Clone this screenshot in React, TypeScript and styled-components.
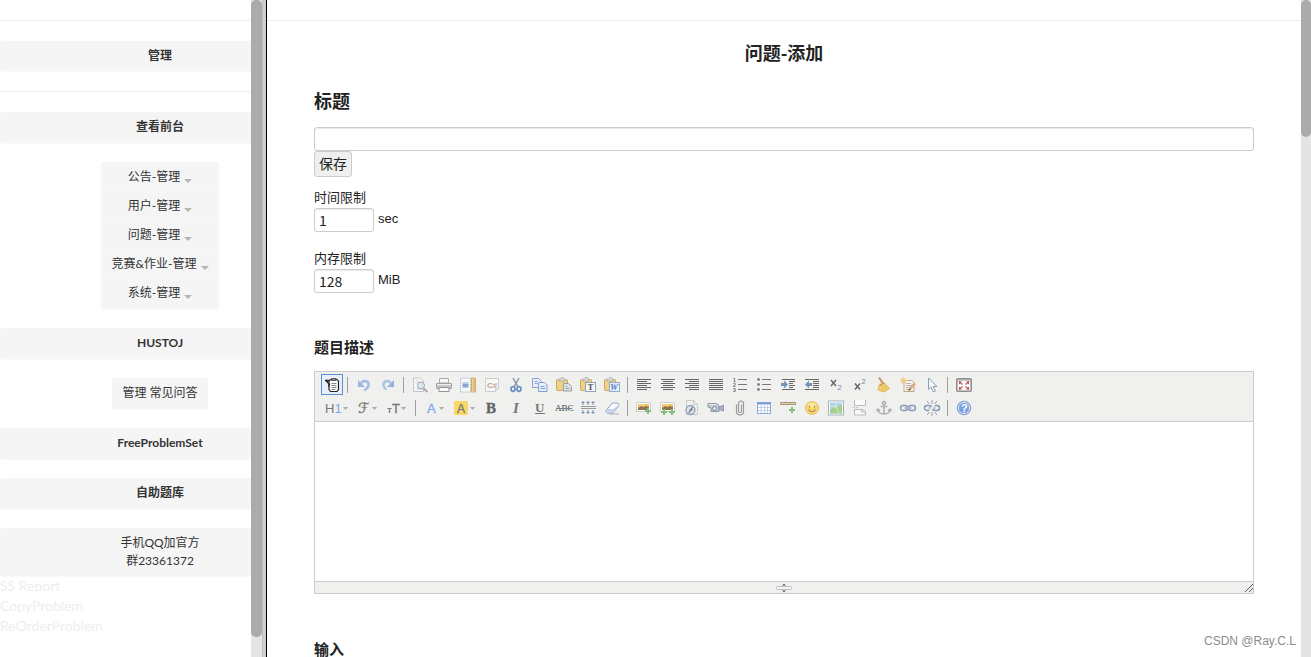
import React from "react";
import styled, { createGlobalStyle } from "styled-components";

const cjk = '"Noto Sans CJK SC", sans-serif';

const GlobalStyle = createGlobalStyle`
  *, *::before, *::after { box-sizing: border-box; }
  body { margin: 0; background: #fff; color: #333; font-family: Lato, ${cjk}; }
`;

/* ---------- frame layout ---------- */

const Page = styled.div`
  display: flex;
  position: relative;
  height: 100vh;
  overflow: hidden;
`;

const Sidebar = styled.nav`
  flex: 0 0 251px;
  overflow: hidden;
`;

const SidebarInner = styled.div`
  display: flex;
  flex-direction: column;
  align-items: center;
  width: 320px;
`;

const ScrollTrack = styled.div<{ $width: number }>`
  flex: 0 0 ${(p) => p.$width}px;
  background: #e4e4e4;
`;

const ScrollThumb = styled.div<{ $length: string }>`
  height: ${(p) => p.$length};
  border-radius: 5px;
  background: #ababab;
`;

const FrameDivider = styled.div`
  flex: 0 0 5px;
  background: #cfcfcf;
  border-left: 1px solid #c0c0c0;
  border-right: 1px solid #000;
`;

const Main = styled.main`
  flex: 1;
  min-width: 0;
  overflow: hidden;
  color: #222;
`;

const Rule = styled.hr`
  align-self: stretch;
  width: 100%;
  height: 1px;
  margin: 20px 0;
  border: 0;
  background: #eee;
`;

/* ---------- sidebar parts ---------- */

const panel = `
  background: #f5f5f5;
  border-radius: 3px;
  box-shadow: 0 1px 1px #f9f9f9;
  color: #333;
  font-size: 12px;
  line-height: 18px;
  text-align: center;
  text-decoration: none;
`;

const NavLink = styled.a<{ $bold?: boolean; $compact?: boolean }>`
  ${panel}
  align-self: ${(p) => (p.$compact ? "center" : "stretch")};
  margin-bottom: 19px;
  padding: 6px 10px 7px;
  font-weight: ${(p) => (p.$bold ? 700 : 400)};
`;

const BarTitle = styled(NavLink)`
  margin-bottom: 0;
  padding-bottom: 6px;
`;

const MenuGroup = styled.div`
  ${panel}
  display: flex;
  flex-direction: column;
  margin-bottom: 19px;
  padding: 1px 0;
`;

const MenuButton = styled.button`
  display: flex;
  align-items: center;
  justify-content: center;
  gap: 4px;
  height: 29px;
  padding: 0 10px;
  border: 0;
  border-bottom: 1px solid #f7f7f7;
  background: none;
  color: inherit;
  font: inherit;
`;

const Caret = styled.span`
  width: 8px;
  margin-top: 8px;
  border: 4px solid transparent;
  border-top-color: #b5b5b5;
  border-bottom: 0;
`;

const GhostLinks = styled.div`
  display: flex;
  flex-direction: column;
  align-items: flex-start;
  width: 100%;
`;

const GhostLink = styled.a`
  color: #eee;
  font-size: 14px;
  line-height: 20px;
  text-decoration: none;
`;

/* ---------- form parts ---------- */

const Form = styled.form`
  width: 100%;
  max-width: 940px;
  margin: 0 auto;
  font-family: "Liberation Sans", ${cjk};
  font-size: 13px;
`;

const PageTitle = styled.h1`
  margin: 0 0 26px;
  font: 700 18px/22px ${cjk};
  text-align: center;
`;

const TitleLabel = styled.label`
  display: block;
  margin-bottom: 16px;
  font: 700 18px/22px ${cjk};
`;

const SectionLabel = styled.label`
  display: block;
  font: 700 15px/20px ${cjk};
`;

const Input = styled.input<{ $short?: boolean }>`
  display: block;
  width: ${(p) => (p.$short ? "60px" : "100%")};
  height: 24px;
  padding: 0 4px;
  border: 1px solid #ccc;
  border-radius: 3px;
  box-shadow: inset 0 1px 1px #eaeaea;
  background: #fff;
  color: #222;
  font: 14px/20px ${cjk};
`;

const SaveButton = styled.button`
  display: block;
  height: 26px;
  margin-bottom: 11px;
  padding: 0 4px 2px;
  border: 1px solid #ccc;
  border-radius: 3px;
  background: #efefef;
  color: #222;
  font: 14px/20px ${cjk};
`;

const Field = styled.div<{ $last?: boolean }>`
  margin-bottom: ${(p) => (p.$last ? "44px" : "17px")};
`;

const FieldLabel = styled.label`
  display: block;
  line-height: 20px;
`;

const FieldRow = styled.div`
  display: flex;
  gap: 4px;
  line-height: 22px;
`;

/* ---------- rich text editor ---------- */

const Editor = styled.div`
  margin: 14px 0 45px;
  border: 1px solid #ccc;
`;

const Toolbar = styled.div`
  padding: 1px 5px 2px;
  border-bottom: 1px solid #ccc;
  background: #f0f0ee;
`;

const ToolRow = styled.div`
  display: flex;
  flex-wrap: wrap;
  align-items: center;
`;

const ToolButton = styled.button<{ $width?: number; $active?: boolean }>`
  display: flex;
  align-items: center;
  justify-content: center;
  width: ${(p) => (p.$width || 24) - 2}px;
  height: 21px;
  margin: 1px;
  padding: 0;
  border: 1px solid ${(p) => (p.$active ? "#5690d2" : "transparent")};
  background: ${(p) => (p.$active ? "#e9effa" : "none")};
`;

const ToolSeparator = styled.span`
  width: 1px;
  height: 16px;
  margin: 0 4px 0 3px;
  background: #a0a0a0;
`;

const EditArea = styled.textarea`
  display: block;
  width: 100%;
  height: 159px;
  padding: 5px;
  border: 0;
  outline: 0;
  resize: none;
`;

const StatusBar = styled.div`
  display: grid;
  grid-template-columns: 1fr auto 1fr;
  align-items: center;
  height: 12px;
  border-top: 1px solid #ccc;
  background: #f0f0ee;
`;

const CornerGrip = styled.svg`
  justify-self: end;
`;

const Watermark = styled.span`
  position: absolute;
  right: 15px;
  bottom: 7px;
  color: #8c8c8c;
  font: 12px/18px "Liberation Sans", sans-serif;
`;

/* ---------- toolbar icons ---------- */

const G = "#777";
const serif = "Liberation Serif, serif";
const sans = "Liberation Sans, sans-serif";

const lines = (rows: [number, number][], y0 = 2) =>
  rows.map(([x, w], i) => <rect key={i} x={x} y={y0 + i * 2} width={w} height="1" fill="#666" />);

const plus = (x: number, y: number) => (
  <path d={`M${x} ${y - 3}v6M${x - 3} ${y}h6`} stroke="#83bf7c" strokeWidth="2" />
);

const clipboard = (
  <>
    <rect x="0.5" y="2.5" width="11" height="11" rx="1" fill="#efd084" stroke="#c9a763" />
    <path d="M3 4V2h1.500l1-1.500h2L8.500 2H9v2z" fill="#d8d8d8" stroke="#aaa" strokeWidth=".7" />
  </>
);

const chain = (
  <g fill="none" stroke="#8799b5">
    <rect x="0.500" y="5.500" width="7" height="5" rx="2.500" strokeWidth="1.400" />
    <rect x="8.500" y="5.500" width="7" height="5" rx="2.500" strokeWidth="1.400" />
    <path d="M4.500 8h7" stroke="#a9b7ce" strokeWidth="1.600" />
  </g>
);

const picture = (
  <>
    <rect x="0.5" y="2.5" width="14" height="9" fill="#fff" stroke="#cfcfcf" />
    <path d="M2 4h11v6H2z" fill="#f2c063" />
    <path d="M2 8l3-2 3 1 2-1 3 1v3H2z" fill="#8d744a" />
    <path d="M3 5h5" stroke="#f8e3a4" />
  </>
);

const icons: Record<string, React.ReactNode> = {
  source: (
    <>
      <path d="M6.500 2.500h6.500l1.500 2v8L13 14.500H6.500L5 12.500V4z" fill="#fff" stroke="#222" strokeWidth="1.200" />
      <path d="M7.500 1.500h4.500v2H7.500z" fill="#888" stroke="#222" strokeWidth=".6" />
      <path d="M7.500 6.500h5M7.500 8.500h5M7.500 10.500h5M7.500 12.500h4" stroke="#777" strokeWidth=".9" />
      <path d="M1.500 3l4 4.500-1 2M1 3.500h4" fill="none" stroke="#222" strokeWidth="1.300" />
    </>
  ),
  undo: (
    <>
      <path d="M5 6C8 2.500 13.500 4 12.500 8.500 12 11 10 12.500 8 13.500" fill="none" stroke="#a3bbe6" strokeWidth="2.400" />
      <path d="M2 3v7h7z" fill="#9cb6e4" />
    </>
  ),
  redo: (
    <>
      <path d="M11 6C8 2.500 3 4 3.500 8.500c.5 2 1.500 3 3 4" fill="none" stroke="#aac2e4" strokeWidth="2.400" />
      <path d="M14 3v7H7z" fill="#92b0dd" />
    </>
  ),
  preview: (
    <>
      <path d="M1.500 1h7l3 3v10.500h-10z" fill="#f7f7f7" stroke="#c4c4c4" />
      <path d="M3.500 4h4M3.500 6h2M3.500 12h4" stroke="#d5d5d5" />
      <circle cx="9" cy="8.500" r="3.500" fill="#dce6ee" stroke="#98a5b1" />
      <path d="M11.500 11.500l4 3.500" stroke="#a4a8ac" strokeWidth="2" />
    </>
  ),
  print: (
    <>
      <path d="M3.500 1.500h9V6h-9z" fill="#f7f7f7" stroke="#aaa" />
      <path d="M.5 6.500h15v5H.5z" fill="#c9c9c9" stroke="#a2a2a2" />
      <path d="M1 7.500h14" stroke="#eee" />
      <path d="M3 10.500h10v4H3z" fill="#fafafa" stroke="#909090" />
    </>
  ),
  template: (
    <>
      <rect x="0.500" y="1" width="10" height="14" fill="#f6f7fa" stroke="#a6adb9" strokeDasharray="1 1" />
      <path d="M2.500 5.500h6v5h-6z" fill="#8ba6d2" />
      <path d="M3 6.500h5" stroke="#bdd0ed" />
      <path d="M11.500 1h4v14h-4z" fill="#f0d192" stroke="#d5ae66" />
      <path d="M13 3h2M13 5h2M13 7h2M13 9h2M13 11h2M13 13h2" stroke="#c39b55" strokeWidth=".6" />
    </>
  ),
  code: (
    <>
      <path d="M1.500 1.500h13v10l-3 3h-10z" fill="#f7f7f6" stroke="#ccc" />
      <path d="M14 11.500h-2.500V14" fill="none" stroke="#ccc" />
      <text x="3" y="11" fontFamily={sans} fontSize="8" fontWeight="700" fill="#bca391">C#</text>
    </>
  ),
  cut: (
    <>
      <path d="M5 1l5 9M11 1L6 10" stroke="#8997a8" strokeWidth="1.500" />
      <g fill="none" stroke="#6d8fc7" strokeWidth="1.700">
        <ellipse cx="5" cy="12" rx="2" ry="2.300" />
        <ellipse cx="11" cy="12" rx="2" ry="2.300" />
      </g>
    </>
  ),
  copy: (
    <g fill="#e8eefa" stroke="#86a2d4">
      <path d="M.5 1.500h6l3 3v6h-9z" />
      <path d="M2.500 4.500h3M2.500 6.500h3" />
      <path d="M6.500 5.500h6l2.500 2.500v6.500H6.500z" />
      <path d="M8.500 9.500h4M8.500 11.500h5" />
    </g>
  ),
  paste: (
    <>
      {clipboard}
      <path d="M7.500 6.500h5l3 3v4.500h-8z" fill="#dde0e5" stroke="#979ca5" />
      <path d="M9.500 9.500h2M9.500 11.500h4" stroke="#9aa4b5" />
    </>
  ),
  pasteText: (
    <>
      {clipboard}
      <rect x="5.500" y="5.500" width="10" height="9" fill="#f4f6fa" stroke="#92a1b7" />
      <text x="7.500" y="13" fontFamily={serif} fontSize="9" fontWeight="700" fill="#555">T</text>
    </>
  ),
  pasteWord: (
    <>
      {clipboard}
      <rect x="5.500" y="5.500" width="10" height="9" fill="#e8f0fd" stroke="#92a9d2" />
      <text x="6" y="13" fontFamily={serif} fontSize="9" fontWeight="700" fontStyle="italic" fill="#557fc6">W</text>
    </>
  ),
  left: lines([[1, 14], [1, 10], [1, 14], [1, 10], [1, 14], [1, 10]]),
  center: lines([[1, 14], [3, 10], [1, 14], [3, 10], [1, 14], [3, 10]]),
  right: lines([[1, 14], [5, 10], [1, 14], [5, 10], [1, 14], [5, 10]]),
  justify: lines([[1, 14], [1, 14], [1, 14], [1, 14], [1, 14], [1, 14]]),
  ordered: (
    <>
      <path d="M6 2.500h9M6 7.500h9M6 12.500h9" stroke="#777" />
      <g fontFamily={sans} fontSize="5" fontWeight="700" fill="#666">
        <text x="1" y="5">1</text>
        <text x="1" y="10">2</text>
        <text x="1" y="15">3</text>
      </g>
    </>
  ),
  bullets: (
    <>
      <path d="M6 2.500h9M6 7.500h9M6 12.500h9" stroke="#777" />
      <g fill="#75808a">
        <circle cx="2.500" cy="2.500" r="1.400" />
        <circle cx="2.500" cy="7.500" r="1.400" />
        <circle cx="2.500" cy="12.500" r="1.400" />
      </g>
    </>
  ),
  indent: (
    <>
      <path d="M2 2.500h13M9 4.500h6M9 6.500h4M9 8.500h6M9 10.500h4M2 12.500h13" stroke="#666" />
      <path d="M1 6h3V3.500L8 7.500l-4 4V9H1z" fill="#7592b8" />
    </>
  ),
  outdent: (
    <>
      <path d="M1 2.500h14M9 4.500h6M9 6.500h6M9 8.500h6M9 10.500h6M1 12.500h14" stroke="#666" />
      <path d="M8 6H5V3.500L1 7.500l4 4V9h3z" fill="#7592b8" />
    </>
  ),
  sub: (
    <>
      <path d="M3 3l5 6M8 3L3 9" stroke="#666" strokeWidth="1.400" />
      <text x="9.500" y="13" fontFamily={sans} fontSize="7" fill="#6b86a6">2</text>
    </>
  ),
  sup: (
    <>
      <path d="M3 6.500l5 6M8 6.500l-5 6" stroke="#666" strokeWidth="1.400" />
      <text x="9.500" y="7" fontFamily={sans} fontSize="7" fill="#6b86a6">2</text>
    </>
  ),
  broom: (
    <>
      <path d="M3 .5l5 7.500" stroke="#cf8d64" strokeWidth="2" />
      <path d="M3 8l5-2.500 5.500 6L8 15 2 13z" fill="#f0d06b" stroke="#dfbb5c" />
      <path d="M4 8.500l4-2.500" stroke="#d08a78" strokeWidth="1.300" />
      <path d="M6 9l3 5M8 8.500l3 4" stroke="#e2c368" />
    </>
  ),
  format: (
    <>
      <path d="M4 3.500h8l2 2v9H4z" fill="#fbf3e2" stroke="#c4a885" />
      <path d="M6 6.500h5M6 8.500h6M6 10.500h4M6 12.500h3" stroke="#a8b0c6" />
      <path d="M3 0v7M0 3.500h7M1 1l5 5M6 1L1 6" stroke="#f0c36a" />
      <path d="M15 6.500L9.500 12" stroke="#d9a980" strokeWidth="2.500" />
      <path d="M10 11l-2 3 3-1z" fill="#665b52" />
    </>
  ),
  select: <path d="M4.500 1v11.500L7 10l2.500 5 2-1-2.500-4.500h4z" fill="#f4f8fd" stroke="#8da0b9" />,
  fullscreen: (
    <>
      <rect x="0.800" y="1.800" width="14.400" height="12.400" rx="1" fill="#fafafa" stroke="#8f8f8f" strokeWidth="1.600" />
      <path d="M1 3h14" stroke="#999" strokeWidth="1" />
      <path d="M3 4.500l3.500 3M13 4.500l-3.500 3M3 12.500l3.500-3M13 12.500l-3.500-3" stroke="#c9605a" strokeWidth="1.200" />
      <path d="M3 4.500h3l-3 3zM13 4.500h-3l3 3zM3 12.500h3l-3-3zM13 12.500h-3l3-3z" fill="#bf4c46" />
    </>
  ),
  bold: <text x="2" y="13" fontFamily={serif} fontSize="15" fontWeight="700" fill="#666" stroke="#666" strokeWidth=".4">B</text>,
  italic: <text x="5" y="13" fontFamily={serif} fontSize="15" fontWeight="700" fontStyle="italic" fill={G}>I</text>,
  underline: (
    <>
      <text x="3" y="12" fontFamily={serif} fontSize="13" fontWeight="700" fill={G}>U</text>
      <path d="M3 13.500h10" stroke={G} />
    </>
  ),
  strike: (
    <>
      <text x="-1" y="11" fontFamily={serif} fontSize="9" fill="#444">ABC</text>
      <path d="M0 8.500h16" stroke="#718196" />
    </>
  ),
  lineHeight: (
    <>
      <path d="M1 6.500h15M1 8.500h15" stroke="#999" />
      <g fill="none" stroke="#7890ae">
        <path d="M3 1v4M8 1v4M13 1v4M3 10v4M8 10v4M13 10v4" />
        <path d="M1.500 2.500h3M6.500 2.500h3M11.500 2.500h3M1.500 12.500h3M6.500 12.500h3M11.500 12.500h3" />
      </g>
    </>
  ),
  eraser: (
    <>
      <path d="M1.500 11l7-8h5l1.500 2.500-6.500 8h-5z" fill="#fafcff" stroke="#8fa3c4" />
      <path d="M1.500 11l2-2h5.500l6-4-6.500 8.500h-5z" fill="#c5d2e7" />
      <path d="M6 14h9" stroke="#b0b0b0" />
    </>
  ),
  image: (
    <>
      {picture}
      {plus(12, 11)}
    </>
  ),
  images: (
    <>
      {picture}
      {plus(4, 12)}
      {plus(12, 12)}
    </>
  ),
  flash: (
    <>
      <path d="M2.500 .500h7l4 4v10h-11z" fill="#f3f3f3" stroke="#c8c8c8" />
      <path d="M9.500 .500v4h4" fill="none" stroke="#c8c8c8" />
      <circle cx="6.500" cy="10" r="4.500" fill="#dde4ea" stroke="#93a1b0" strokeWidth="1.300" />
      <path d="M4.500 12.500c2 0 2-5 4.500-5M5.500 10h3" fill="none" stroke="#6d8093" strokeWidth="1.300" />
    </>
  ),
  media: (
    <>
      <path d="M0 3.500h8l3 2v6H3V8L0 7z" fill="#c5cad3" stroke="#8b96a9" />
      <path d="M11 7l4.500-2v6L11 9.500z" fill="#a5b1c6" stroke="#8492ad" strokeWidth=".8" />
      <circle cx="6.500" cy="8.500" r="2" fill="#e8ecf2" stroke="#7886a0" />
      <path d="M1 4.500h7" stroke="#eceef2" />
    </>
  ),
  file: (
    <path
      d="M4.500 4.500v7c0 4.500 7 4.500 7 0V4c0-4-5-4-5 0v7c0 2 3 2 3 0V4.500"
      fill="none" stroke="#9b9b9b" strokeWidth="1.200"
    />
  ),
  table: (
    <>
      <rect x="1.500" y="2.500" width="13" height="11" fill="#fff" stroke="#8ca7d9" />
      <path d="M1 2h14v2.500H1z" fill="#809fd6" />
      <path d="M2 7.500h12M2 10.500h12M5 4v9M8.500 4v9M11.500 4v9" stroke="#c0d0ec" />
    </>
  ),
  hr: (
    <>
      <path d="M.5 2.500h15v2H.5z" fill="#e5d3ad" stroke="#a69577" />
      {plus(12, 10)}
    </>
  ),
  emoticon: (
    <>
      <circle cx="8" cy="8" r="6.500" fill="#f7d674" stroke="#e9c36c" />
      <ellipse cx="8" cy="5" rx="4" ry="2" fill="#fbe9a5" />
      <path d="M5.500 5.500v2M10.500 5.500v2M4.500 9.500c1.500 3 5.500 3 7 0" fill="none" stroke="#b58c4e" strokeWidth="1.200" />
    </>
  ),
  map: (
    <>
      <rect x="0.500" y="1" width="15" height="14" fill="#fff" stroke="#a5b2bd" />
      <path d="M2 2.500h12v11H2z" fill="#abd3ee" />
      <path d="M2 10l4-3 3 1 5-4v9.500H2z" fill="#a5cf8d" />
      <path d="M2 6l6 1 3 6M8 2.500V7" fill="none" stroke="#e5eeba" />
    </>
  ),
  pagebreak: (
    <>
      <path d="M2.500 0v5.500h11V0M2.500 15V9.500h7.500l3.500 2V15z" fill="#fafafa" stroke="#b9b9b9" />
      <path d="M9.500 9.500V12h4" fill="none" stroke="#b9b9b9" />
      <path d="M1 7.500h2M4 7.500h2" stroke="#c5c5c5" />
    </>
  ),
  anchor: (
    <g fill="none" stroke="#b0b0b0" strokeWidth="1.500">
      <circle cx="8" cy="3" r="1.600" />
      <path d="M8 5v9M4.500 6.500h7M1.500 9c.5 4 3 5 6.500 5s6-1 6.500-5M.5 11l1.500-2 2 2M12 11l2-2 1.500 2" />
    </g>
  ),
  link: chain,
  unlink: (
    <>
      {chain}
      <path d="M10.500 4L5.500 12" stroke="#f0f0ee" strokeWidth="2" />
      <path d="M8 0v4M3 1l2.500 3M13 1l-2.500 3M8 12v4M3 15l2.500-3M13 15l-2.500-3" stroke="#9a9fa7" />
    </>
  ),
  about: (
    <>
      <circle cx="8" cy="8" r="6.800" fill="#7b9edc" stroke="#87a4d8" />
      <circle cx="8" cy="8" r="5.600" fill="none" stroke="#dce7fa" />
      <text x="5" y="12" fontFamily={sans} fontSize="11" fontWeight="700" fill="#fff">?</text>
    </>
  ),
};

const dropMark = (x: number) => <path d={`M${x} 7h5l-2.500 3z`} fill="#aaa" />;

const wideIcons: Record<string, React.ReactNode> = {
  heading: (
    <>
      <text x="2" y="13" fontFamily={sans} fontSize="13" fill={G}>
        H<tspan fill="#7fa5e5">1</tspan>
      </text>
      {dropMark(20)}
    </>
  ),
  font: (
    <>
      <text x="4" y="13" fontFamily="DejaVu Sans, DejaVu Serif, serif" fontSize="14" fill={G} stroke={G} strokeWidth=".3">ℱ</text>
      {dropMark(18)}
    </>
  ),
  size: (
    <>
      <text x="3" y="13" fontFamily={sans} fontSize="8" fontWeight="700" fill={G}>T</text>
      <text x="8" y="13" fontFamily={sans} fontSize="13" fill={G} stroke={G} strokeWidth=".3">T</text>
      {dropMark(17)}
    </>
  ),
  color: (
    <>
      <text x="5" y="13" fontFamily={sans} fontSize="13" fill="#82a8e8" stroke="#82a8e8" strokeWidth=".3">A</text>
      {dropMark(17)}
    </>
  ),
  highlight: (
    <>
      <rect x="2" y="1" width="14" height="14" rx="1" fill="#f8d968" />
      <text x="5" y="13" fontFamily={sans} fontSize="12" fill="#777" stroke="#777" strokeWidth=".3">A</text>
      {dropMark(18)}
    </>
  ),
};

type Tool = string | [name: string, label: string, width?: number];

const rowOne: Tool[] = [
  ["source", "HTML代码"], "|", ["undo", "后退"], ["redo", "前进"], "|",
  ["preview", "预览"], ["print", "打印"], ["template", "插入模板"], ["code", "插入程序代码"],
  ["cut", "剪切"], ["copy", "复制"], ["paste", "粘贴"], ["pasteText", "粘贴为无格式文本"],
  ["pasteWord", "从Word粘贴"], "|",
  ["left", "左对齐"], ["center", "居中"], ["right", "右对齐"], ["justify", "两端对齐"],
  ["ordered", "编号"], ["bullets", "项目符号"], ["indent", "增加缩进"], ["outdent", "减少缩进"],
  ["sub", "下标"], ["sup", "上标"], ["broom", "清理HTML代码"], ["format", "一键排版"],
  ["select", "全选"], "|", ["fullscreen", "全屏显示"],
];

const rowTwo: Tool[] = [
  ["heading", "段落", 31], ["font", "字体", 31], ["size", "文字大小", 30], "|",
  ["color", "文字颜色", 30], ["highlight", "文字背景", 30],
  ["bold", "粗体"], ["italic", "斜体"], ["underline", "下划线"], ["strike", "删除线"],
  ["lineHeight", "行距"], ["eraser", "删除格式"], "|",
  ["image", "图片"], ["images", "批量图片上传"], ["flash", "Flash"], ["media", "视音频"],
  ["file", "插入文件"], ["table", "表格"], ["hr", "插入横线"], ["emoticon", "插入表情"],
  ["map", "百度地图"], ["pagebreak", "插入分页符"], ["anchor", "锚点"], ["link", "超级链接"],
  ["unlink", "取消超级链接"], "|", ["about", "关于"],
];

function Tools({ items }: { items: Tool[] }) {
  return (
    <ToolRow>
      {items.map((item, i) => {
        if (typeof item === "string") return <ToolSeparator key={i} />;
        const [name, label, width] = item;
        const drawn = width ? 26 : 16;
        return (
          <ToolButton key={name} type="button" aria-label={label} $width={width} $active={name === "source"}>
            <svg width={drawn} height="16" viewBox={`0 0 ${drawn} 16`} overflow="visible" aria-hidden="true">
              {width ? wideIcons[name] : icons[name]}
            </svg>
          </ToolButton>
        );
      })}
    </ToolRow>
  );
}

const menus = ["公告-管理", "用户-管理", "问题-管理", "竞赛&作业-管理", "系统-管理"];

export default function App() {
  return (
    <>
      <GlobalStyle />
      <Page>
        <Sidebar>
          <SidebarInner>
            <Rule />
            <BarTitle href="#" $bold>管理</BarTitle>
            <Rule />
            <NavLink href="#" $bold>查看前台</NavLink>
            <MenuGroup>
              {menus.map((m) => (
                <MenuButton key={m} type="button">
                  {m}
                  <Caret />
                </MenuButton>
              ))}
            </MenuGroup>
            <NavLink href="#" $bold>HUSTOJ</NavLink>
            <NavLink href="#" $compact>管理 常见问答</NavLink>
            <NavLink href="#" $bold>FreeProblemSet</NavLink>
            <NavLink href="#" $bold>自助题库</NavLink>
            <BarTitle href="#">
              手机QQ加官方
              <br />
              群23361372
            </BarTitle>
            <GhostLinks>
              <GhostLink href="#">SS Report</GhostLink>
              <GhostLink href="#">CopyProblem</GhostLink>
              <GhostLink href="#">ReOrderProblem</GhostLink>
            </GhostLinks>
          </SidebarInner>
        </Sidebar>
        <ScrollTrack $width={11}>
          <ScrollThumb $length="97%" />
        </ScrollTrack>
        <FrameDivider />
        <Main>
          <Rule />
          <Form>
            <PageTitle>问题-添加</PageTitle>
            <TitleLabel htmlFor="title">标题</TitleLabel>
            <Input id="title" type="text" />
            <SaveButton type="button">保存</SaveButton>
            <Field>
              <FieldLabel htmlFor="time">时间限制</FieldLabel>
              <FieldRow>
                <Input id="time" type="text" defaultValue="1" $short />
                sec
              </FieldRow>
            </Field>
            <Field $last>
              <FieldLabel htmlFor="memory">内存限制</FieldLabel>
              <FieldRow>
                <Input id="memory" type="text" defaultValue="128" $short />
                MiB
              </FieldRow>
            </Field>
            <SectionLabel htmlFor="description">题目描述</SectionLabel>
            <Editor>
              <Toolbar>
                <Tools items={rowOne} />
                <Tools items={rowTwo} />
              </Toolbar>
              <EditArea id="description" />
              <StatusBar>
                <span />
                <svg width="16" height="10" viewBox="0 0 16 10" aria-hidden="true">
                  <path d="M6 2.500L8 .5l2 2zM6 7.500l2 2 2-2z" fill="#666" />
                  <rect x="0.500" y="3.500" width="15" height="3" rx="1" fill="#f5f5f5" stroke="#bbb" />
                </svg>
                <CornerGrip width="8" height="8" viewBox="0 0 8 8" aria-hidden="true">
                  <path d="M0 8l8-8M4 8l4-4" stroke="#555" />
                </CornerGrip>
              </StatusBar>
            </Editor>
            <SectionLabel htmlFor="input">输入</SectionLabel>
            <Editor>
              <EditArea id="input" />
            </Editor>
          </Form>
        </Main>
        <ScrollTrack $width={10}>
          <ScrollThumb $length="137px" />
        </ScrollTrack>
        <Watermark>CSDN @Ray.C.L</Watermark>
      </Page>
    </>
  );
}
